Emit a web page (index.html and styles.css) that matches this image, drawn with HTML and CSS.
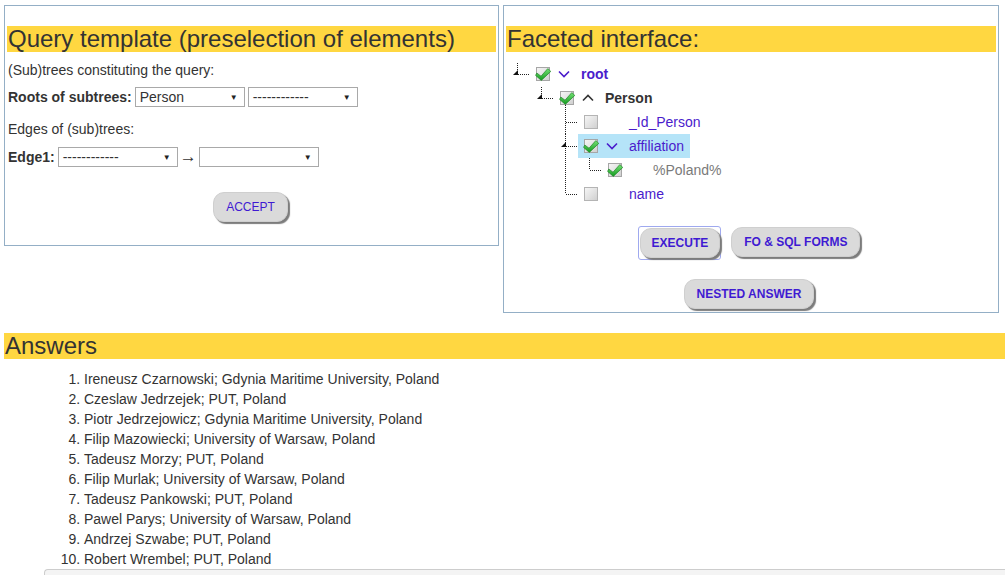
FILE: index.html
```html
<!DOCTYPE html>
<html>
<head>
<meta charset="utf-8">
<title>Query</title>
<link rel="stylesheet" href="styles.css">
</head>
<body>
<svg class="defs" width="0" height="0" aria-hidden="true">
  <defs>
    <linearGradient id="gbox" x1="0" y1="0" x2="1" y2="1">
      <stop offset="0" stop-color="#f7f7f7"/>
      <stop offset="1" stop-color="#cfcfcf"/>
    </linearGradient>
    <linearGradient id="gchk" x1="0" y1="0" x2="0" y2="1">
      <stop offset="0" stop-color="#74e274"/>
      <stop offset="1" stop-color="#139a1f"/>
    </linearGradient>
  </defs>
</svg>

<div class="top">
  <section class="panel query">
    <h2 class="band">Query template (preselection of elements)</h2>
    <div class="qbody">
      <p class="line l1">(Sub)trees constituting the query:</p>
      <div class="frow r1">
        <b>Roots of subtrees:</b>
        <span class="sel s110">Person</span>
        <span class="sel s110 narrow">------------</span>
      </div>
      <p class="line l2">Edges of (sub)trees:</p>
      <div class="frow r2">
        <b>Edge1:</b>
        <span class="sel s120">------------</span>
        <span class="arrow">→</span>
        <span class="sel s120"></span>
      </div>
      <div class="bar acc">
        <span class="btn normal">ACCEPT</span>
      </div>
    </div>
  </section>

  <section class="panel facet">
    <h2 class="band">Faceted interface:</h2>
    <div class="tree">
      <div class="trow">
        <svg class="conn" width="18" height="24" viewBox="0 0 18 24">
          <line x1="5.5" y1="1" x2="5.5" y2="12" class="dot"/>
          <line x1="6" y1="12.5" x2="18" y2="12.5" class="dot"/>
          <polygon points="1,13 6,8 6,13" fill="#111"/>
        </svg>
        <span class="node">
          <svg class="cb" width="14" height="14" viewBox="0 0 14 14"><rect x="0.5" y="0.5" width="13" height="13" fill="url(#gbox)" stroke="#a6a6a6"/><path d="M0.8 6 L5 9.2 L11.8 1.6 L14.8 4.4 L5.3 13.4 L-0.4 8.4 Z" fill="url(#gchk)" stroke="#23852a" stroke-width="0.7"/></svg>
          <span class="chev"><svg width="12" height="8" viewBox="0 0 12 8"><path d="M1 1.5 L6 6.5 L11 1.5" fill="none" stroke="#4a1ccc" stroke-width="1.6"/></svg></span>
          <span class="lbl purple bold">root</span>
        </span>
      </div>
      <div class="trow">
        <i class="g"></i>
        <svg class="conn" width="18" height="24" viewBox="0 0 18 24">
          <line x1="5.5" y1="1" x2="5.5" y2="12" class="dot"/>
          <line x1="6" y1="12.5" x2="18" y2="12.5" class="dot"/>
          <polygon points="1,13 6,8 6,13" fill="#111"/>
        </svg>
        <span class="node">
          <svg class="cb" width="14" height="14" viewBox="0 0 14 14"><rect x="0.5" y="0.5" width="13" height="13" fill="url(#gbox)" stroke="#a6a6a6"/><path d="M0.8 6 L5 9.2 L11.8 1.6 L14.8 4.4 L5.3 13.4 L-0.4 8.4 Z" fill="url(#gchk)" stroke="#23852a" stroke-width="0.7"/></svg>
          <span class="chev"><svg width="12" height="8" viewBox="0 0 12 8"><path d="M1 6.5 L6 1.5 L11 6.5" fill="none" stroke="#333" stroke-width="1.6"/></svg></span>
          <span class="lbl bold">Person</span>
        </span>
      </div>
      <div class="trow">
        <i class="g"></i><i class="g"></i>
        <svg class="conn" width="18" height="24" viewBox="0 0 18 24">
          <line x1="5.5" y1="-5" x2="5.5" y2="24" class="dot"/>
          <line x1="6" y1="12.5" x2="18" y2="12.5" class="dot"/>
        </svg>
        <span class="node">
          <svg class="cb" width="14" height="14" viewBox="0 0 14 14"><rect x="0.5" y="0.5" width="13" height="13" fill="url(#gbox)" stroke="#b4b4b4"/></svg>
          <span class="chev"></span>
          <span class="lbl purple">_Id_Person</span>
        </span>
      </div>
      <div class="trow">
        <i class="g"></i><i class="g"></i>
        <svg class="conn" width="18" height="24" viewBox="0 0 18 24">
          <line x1="5.5" y1="0" x2="5.5" y2="24" class="dot"/>
          <line x1="6" y1="12.5" x2="18" y2="12.5" class="dot"/>
          <polygon points="1,13 6,8 6,13" fill="#111"/>
        </svg>
        <span class="node hl">
          <svg class="cb" width="14" height="14" viewBox="0 0 14 14"><rect x="0.5" y="0.5" width="13" height="13" fill="url(#gbox)" stroke="#a6a6a6"/><path d="M0.8 6 L5 9.2 L11.8 1.6 L14.8 4.4 L5.3 13.4 L-0.4 8.4 Z" fill="url(#gchk)" stroke="#23852a" stroke-width="0.7"/></svg>
          <span class="chev"><svg width="12" height="8" viewBox="0 0 12 8"><path d="M1 1.5 L6 6.5 L11 1.5" fill="none" stroke="#4a1ccc" stroke-width="1.6"/></svg></span>
          <span class="lbl purple">affiliation</span>
        </span>
      </div>
      <div class="trow">
        <i class="g"></i><i class="g"></i><i class="g v"></i>
        <svg class="conn" width="18" height="24" viewBox="0 0 18 24">
          <line x1="5.5" y1="0" x2="5.5" y2="12" class="dot"/>
          <line x1="6" y1="12.5" x2="18" y2="12.5" class="dot"/>
        </svg>
        <span class="node">
          <svg class="cb" width="14" height="14" viewBox="0 0 14 14"><rect x="0.5" y="0.5" width="13" height="13" fill="url(#gbox)" stroke="#a6a6a6"/><path d="M0.8 6 L5 9.2 L11.8 1.6 L14.8 4.4 L5.3 13.4 L-0.4 8.4 Z" fill="url(#gchk)" stroke="#23852a" stroke-width="0.7"/></svg>
          <span class="chev"></span>
          <span class="lbl gray">%Poland%</span>
        </span>
      </div>
      <div class="trow">
        <i class="g"></i><i class="g"></i>
        <svg class="conn" width="18" height="24" viewBox="0 0 18 24">
          <line x1="5.5" y1="0" x2="5.5" y2="12" class="dot"/>
          <line x1="6" y1="12.5" x2="18" y2="12.5" class="dot"/>
        </svg>
        <span class="node">
          <svg class="cb" width="14" height="14" viewBox="0 0 14 14"><rect x="0.5" y="0.5" width="13" height="13" fill="url(#gbox)" stroke="#b4b4b4"/></svg>
          <span class="chev"></span>
          <span class="lbl purple">name</span>
        </span>
      </div>
    </div>
    <div class="bar brow">
      <span class="focus"><span class="btn">EXECUTE</span></span>
      <span class="btn">FO &amp; SQL FORMS</span>
    </div>
    <div class="bar brow2">
      <span class="btn">NESTED ANSWER</span>
    </div>
  </section>
</div>

<section class="answers">
  <h2 class="band">Answers</h2>
  <ol class="list">
    <li>Ireneusz Czarnowski; Gdynia Maritime University, Poland</li>
    <li>Czeslaw Jedrzejek; PUT, Poland</li>
    <li>Piotr Jedrzejowicz; Gdynia Maritime University, Poland</li>
    <li>Filip Mazowiecki; University of Warsaw, Poland</li>
    <li>Tadeusz Morzy; PUT, Poland</li>
    <li>Filip Murlak; University of Warsaw, Poland</li>
    <li>Tadeusz Pankowski; PUT, Poland</li>
    <li>Pawel Parys; University of Warsaw, Poland</li>
    <li>Andrzej Szwabe; PUT, Poland</li>
    <li>Robert Wrembel; PUT, Poland</li>
  </ol>
  <div class="foot"></div>
</section>
</body>
</html>
```

FILE: styles.css
```css
* { box-sizing: border-box; }

html, body { overflow: hidden; }

body {
  margin: 0;
  background: #ffffff;
  font-family: "Liberation Sans", Arial, sans-serif;
  color: #333;
}

.defs { display: block; width: 0; height: 0; }

.top {
  display: flex;
  align-items: flex-start;
  gap: 4px;
  padding: 5px 0 0 4px;
}

.panel {
  border: 1px solid #94afc6;
  padding: 0 2px;
}

.query { width: 495px; height: 241px; }
.facet { width: 496px; height: 308px; }

.band {
  margin: 20px 0 0;
  height: 26px;
  line-height: 26px;
  padding-left: 1px;
  background: #ffd741;
  font-size: 24px;
  font-weight: normal;
  color: #333;
  white-space: nowrap;
}

.qbody { padding-left: 1px; font-size: 14px; }

.line { margin: 0; line-height: 18px; }
.l1 { margin-top: 9px; }
.l2 { margin-top: 13px; }

.frow {
  display: flex;
  align-items: center;
  height: 20px;
}
.r1 { margin-top: 8px; }
.r2 { margin-top: 9px; }
.r1 b { margin-right: 3px; }
.r2 b { margin-right: 3px; }
.r1 .narrow { margin-left: 3px; }

.sel {
  display: inline-flex;
  align-items: center;
  justify-content: space-between;
  height: 20px;
  border: 1px solid #a9a9a9;
  padding: 0 6px 0 4px;
  font-size: 14px;
  color: #333;
  background: #fff;
}
.sel::after {
  content: "▼";
  font-size: 8px;
  color: #222;
  margin-left: auto;
}
.s110 { width: 110px; }
.s120 { width: 120px; }

.arrow {
  font-size: 17px;
  line-height: 20px;
  width: 21px;
  text-align: center;
  color: #333;
}

.bar {
  display: flex;
  justify-content: center;
  align-items: flex-start;
}
.acc { margin-top: 25px; padding-right: 3px; }

.btn {
  display: inline-block;
  height: 30px;
  line-height: 29px;
  padding: 0 12px;
  border-radius: 11px;
  background: #dadada;
  border: 1px solid #cfcfcf;
  box-shadow: 2px 2px 1px #7c7c7c;
  color: #3f1ad2;
  font-size: 12px;
  font-weight: bold;
}
.btn.normal { font-weight: normal; }

.focus {
  display: block;
  border: 1px solid #9fa9ef;
  border-radius: 3px;
  padding: 1px 0 1px 1px;
  margin-right: 10px;
}
.focus .btn { padding: 0 11px; }

.brow { margin-top: 20px; height: 34px; padding-right: 4px; }
.brow > .btn { margin-top: 1px; }
.brow2 { margin-top: 19px; padding-right: 4px; }

/* tree */
.tree { margin: 10px 0 0 6px; }

.trow {
  display: flex;
  align-items: center;
  height: 24px;
}

.g { display: block; width: 24px; height: 24px; flex: none; }
.g.v {
  background: linear-gradient(#222 50%, transparent 0) 5px 0 / 1px 2px repeat-y;
}

.conn { flex: none; overflow: visible; display: block; }
.dot { stroke: #222; stroke-width: 1; stroke-dasharray: 1 1; }

.node {
  display: flex;
  align-items: center;
  height: 24px;
  padding: 0 6px;
}
.node.hl { background: #b5e4f8; }

.cb { display: block; flex: none; overflow: visible; }

.chev {
  display: block;
  width: 31px;
  height: 8px;
  padding-left: 8px;
  flex: none;
}
.chev svg { display: block; }

.lbl { font-size: 14px; line-height: 24px; }
.purple { color: #4a1ccc; }
.bold { font-weight: bold; }
.gray { color: #7a7a7a; }
.lbl.bold:not(.purple) { color: #333; }

/* answers */
.answers { margin-top: 20px; padding-left: 4px; }
.answers .band { margin: 0; padding-left: 1px; }

.list {
  margin: 10px 0 0;
  padding-left: 80px;
  font-size: 14px;
  line-height: 20px;
  color: #333;
}

.foot {
  margin-left: 40px;
  height: 6px;
  border-top: 1px solid #cdcdcd;
  border-left: 1px solid #cdcdcd;
  border-top-left-radius: 4px;
  background: #f4f4f4;
}
```
